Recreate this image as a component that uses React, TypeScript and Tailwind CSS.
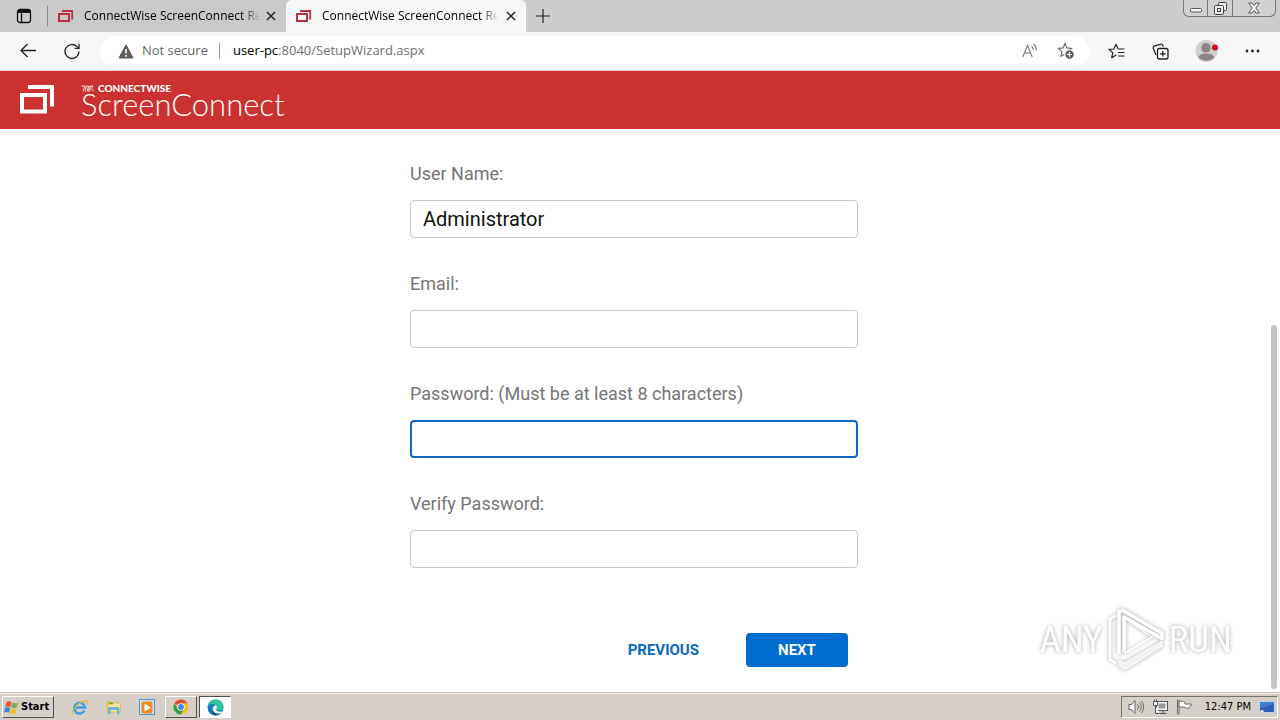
import type { ReactNode } from "react"

const fields = [
  { id: "username", label: "User Name:", type: "text", value: "Administrator" },
  { id: "email", label: "Email:", type: "email", value: "" },
  { id: "password", label: "Password: (Must be at least 8 characters)", type: "password", value: "", active: true },
  { id: "verify", label: "Verify Password:", type: "password", value: "" },
]

// two overlapping windows, used for the favicon
function Favicon() {
  return (
    <svg width="16" height="16" viewBox="0 0 16 16" fill="none" stroke="#b8323f" className="shrink-0">
      <path d="M4 3h10.200v7.500h-1" strokeWidth="1.800" />
      <rect x="1" y="6" width="10" height="7" strokeWidth="2" />
    </svg>
  )
}

function CloseIcon() {
  return (
    <svg width="10" height="10" viewBox="0 0 10 10" stroke="#222" strokeWidth="1.5">
      <path d="M1 1l8 8M9 1l-8 8" />
    </svg>
  )
}

function Tab({ active }: { active?: boolean }) {
  return (
    <div
      className={
        active
          ? "flex h-8 w-60 items-center rounded-t-md bg-[#f7f7f7] pr-2.5 pl-2.5"
          : "flex h-8 w-[238px] items-center bg-[#c9c9c9] pr-2.5 pl-2.5"
      }
    >
      <Favicon />
      <span className="ml-2.5 w-44 overflow-hidden text-xs whitespace-nowrap text-black [mask-image:linear-gradient(to_right,black_90%,transparent)]">
        ConnectWise ScreenConnect Remote
      </span>
      <button aria-label="Close tab" className="ml-auto">
        <CloseIcon />
      </button>
    </div>
  )
}

function TabBar() {
  return (
    <div className="flex h-8 items-center bg-[#cccccc]">
      <button aria-label="Tab actions" className="ml-4">
        <svg width="16" height="16" viewBox="0 0 16 16" fill="none" stroke="#111" strokeWidth="1.3">
          <rect x="1.5" y="1.5" width="13" height="13" rx="2.5" />
          <path d="M2 3.5h12" strokeWidth="3" />
          <path d="M5.5 4v10" />
        </svg>
      </button>
      <div className="ml-[15px] h-5 w-px bg-[#8b8b8b]" />
      <Tab />
      <Tab active />
      <button aria-label="New tab" className="ml-2.5">
        <svg width="14" height="14" viewBox="0 0 14 14" stroke="#222" strokeWidth="1.2">
          <path d="M7 0v14M0 7h14" />
        </svg>
      </button>
      <div className="mr-1 ml-auto flex h-[17px] self-start rounded-b-md border border-t-0 border-[#777] bg-[#d0d0d0]">
        <button aria-label="Minimize" className="flex w-6 items-center justify-center border-r border-[#777]">
          <svg width="12" height="16" viewBox="0 0 12 16" fill="#f5f5f5" stroke="#555">
            <rect x="0.5" y="8.5" width="11" height="3.5" rx="1" />
          </svg>
        </button>
        <button aria-label="Restore" className="flex w-[25px] items-center justify-center border-r border-[#777]">
          <svg width="13" height="13" viewBox="0 0 13 13" fill="#eee" stroke="#444">
            <rect x="4.5" y="0.5" width="8" height="8" rx="1" />
            <rect x="0.5" y="3.5" width="9" height="9" rx="1" />
            <rect x="3.5" y="6.5" width="3" height="3" />
          </svg>
        </button>
        <button aria-label="Close" className="flex w-[42px] items-center justify-center">
          <svg width="12" height="12" viewBox="0 0 12 12" fill="#f5f5f5" stroke="#555">
            <path d="M0.7 1h3.3l2 2.6L8 1h3.3L7.8 6l3.5 5H8L6 8.4 4 11H0.7l3.5-5z" />
          </svg>
        </button>
      </div>
    </div>
  )
}

const star = "M8 1.5l1.9 4.4 4.7.5-3.5 3.2 1 4.7L8 12l-4.1 2.3 1-4.7L1.4 6.4l4.7-.5z"

function Toolbar() {
  return (
    <div className="flex h-[39px] items-center border-b border-[#eccfd3] bg-[#f7f7f7] pr-5 pl-5">
      <button aria-label="Back">
        <svg width="16" height="16" viewBox="0 0 16 16" fill="none" stroke="#222" strokeWidth="1.3">
          <path d="M16 7.5H1M7.5 1L1 7.5 7.5 14" />
        </svg>
      </button>
      <button aria-label="Refresh" className="ml-7">
        <svg width="17" height="17" viewBox="0 0 17 17" fill="none" stroke="#222" strokeWidth="1.3">
          <path d="M15 8.500a7 7 0 1 1-2.200-5.100l2 1.900M15 0.800v4.500H10.500" />
        </svg>
      </button>
      <div className="ml-[19px] flex h-[30px] flex-1 items-center rounded-full bg-white pr-3.5 pl-[18px]">
        <svg width="16" height="15" viewBox="0 0 16 15" className="shrink-0">
          <path d="M8 0.8l7 13.200H1z" fill="#5c5c5c" stroke="#5c5c5c" strokeLinejoin="round" />
          <path d="M8 5v4.5M8 11v1.8" stroke="#fff" strokeWidth="1.6" />
        </svg>
        <span className="ml-2 text-[13px] text-[#666]">Not secure</span>
        <div className="ml-[11px] h-4 w-px bg-[#999]" />
        <span className="ml-[13px] text-[13px] text-[#707070]">
          <span className="text-black">user-pc</span>:8040/SetupWizard.aspx
        </span>
        <button aria-label="Read aloud" className="ml-auto">
          <svg width="17" height="16" viewBox="0 0 17 16" fill="none" stroke="#777" strokeWidth="1.1">
            <path d="M0.8 14L5.5 2.5 10.2 14M2.4 10h6.2" />
            <path d="M9.500 2.800a5 5 0 0 1 1.600 4M11.500 0.800a8 8 0 0 1 2.800 6.500" />
          </svg>
        </button>
        <button aria-label="Add to favorites" className="ml-[18px]">
          <svg width="18" height="18" viewBox="0 0 18 18" fill="none" stroke="#666" strokeWidth="1.1">
            <path d={star} />
            <circle cx="12.500" cy="12.500" r="4.800" fill="#5c5c5c" stroke="#fff" />
            <path d="M12.500 10v5M10 12.500h5" stroke="#fff" strokeWidth="1.2" />
          </svg>
        </button>
      </div>
      <button aria-label="Favorites" className="ml-[19px]">
        <svg width="18" height="17" viewBox="0 0 18 17" fill="none" stroke="#222" strokeWidth="1.2" strokeLinejoin="round">
          <path d="M10 5.800L8 1.200 5.900 6l-5 .4L4.800 9.800l-1.100 4.900L8.200 12" />
          <path d="M10 6h6.500M10 9.500h6.500M10 13h6.500" />
        </svg>
      </button>
      <button aria-label="Collections" className="ml-[26px]">
        <svg width="17" height="17" viewBox="0 0 17 17" fill="none" stroke="#222" strokeWidth="1.3">
          <rect x="5.5" y="5.5" width="10.5" height="10.5" rx="2" />
          <path d="M10.8 8v5.6M8 10.8h5.6" />
          <path d="M4 12L1.3 5.5a2 2 0 0 1 1.3-2.6l5.8-1.6a2 2 0 0 1 2.4 1.2l.4 1.1" />
        </svg>
      </button>
      <button aria-label="Profile" className="ml-[26px]">
        <svg width="24" height="24" viewBox="0 0 24 24">
          <circle cx="11.5" cy="12" r="11" fill="#d2cfcc" />
          <circle cx="11" cy="8.8" r="4.8" fill="#8b8685" />
          <path d="M3.5 18.500c0-2.500 3.200-4 7.700-4s7.800 1.500 7.800 4a11 11 0 0 1-15.500 0z" fill="#8b8685" />
          <circle cx="20" cy="8.500" r="3" fill="#d9001b" />
        </svg>
      </button>
      <button aria-label="Settings and more" className="ml-[26px]">
        <svg width="15" height="4" viewBox="0 0 15 4" fill="#222">
          <circle cx="2" cy="2" r="1.4" />
          <circle cx="7.500" cy="2" r="1.4" />
          <circle cx="13" cy="2" r="1.4" />
        </svg>
      </button>
    </div>
  )
}

function BrandHeader() {
  return (
    <header className="flex h-[58px] items-center bg-[#cc3131] pl-5 text-white">
      <svg width="34" height="30" viewBox="0 0 34 30" fill="none" stroke="#fff" strokeWidth="4">
        <path d="M8 2h24v19M28 19.500h6" strokeWidth="4" />
        <path d="M26.500 8h3.500v15.500h-3.500z" fill="#cc3131" stroke="none" />
        <rect x="2" y="10" width="23" height="16.500" />
      </svg>
      <div className="mb-1 ml-[27px] font-[Lato,sans-serif]">
        <div className="flex h-3 items-center gap-1">
          <svg width="13" height="7" viewBox="0 0 13 7" fill="none" stroke="#fff" strokeWidth="0.8">
            <path d="M0.500 1h3.500L2 6.500M5.500 1c-1 2-1.500 3.500-1 5.500M5.500 1h2l-1.500 5.500M8.500 1l-1 5.500M9 1c1 1.500-.5 3.500 0 5.500M9.500 1h2.500c-1.500 2-1.500 3 .5 5.500" />
          </svg>
          <span className="text-[10px] leading-3 font-black">CONNECTWISE</span>
        </div>
        <div className="text-[31px] leading-5 font-light">ScreenConnect</div>
      </div>
    </header>
  )
}

function SetupForm() {
  return (
    <form className="mx-auto w-[448px] pt-[33px] font-[Roboto,sans-serif]" onSubmit={(e) => e.preventDefault()}>
      <div className="flex flex-col gap-[34px]">
        {fields.map((field) => (
          <div key={field.id} className="flex flex-col gap-3.5">
            <label htmlFor={field.id} className="text-lg leading-6 text-[#757575]">
              {field.label}
            </label>
            <input
              id={field.id}
              type={field.type}
              defaultValue={field.value}
              className={
                field.active
                  ? "h-[38px] rounded border-2 border-[#0f6abf] px-[11px] text-xl outline-none"
                  : "h-[38px] rounded border border-[#c8c8c8] px-3 text-xl text-[#111] outline-none"
              }
            />
          </div>
        ))}
      </div>
      <div className="mt-[65px] flex justify-end gap-[15px] pr-2.5 text-[15px] font-bold">
        <button type="button" className="h-[34px] px-8 text-[#0b68c0]">
          PREVIOUS
        </button>
        <button type="submit" className="h-[34px] w-[102px] rounded bg-[#006bd0] text-white">
          NEXT
        </button>
      </div>
    </form>
  )
}

function Watermark() {
  return (
    <div className="absolute right-12 bottom-5 flex items-center gap-1 font-['Roboto_Condensed','Open_Sans_Condensed','Noto_Sans_ExtraCondensed','Noto_Sans_Condensed',Roboto,sans-serif] text-[37px] text-white drop-shadow-[0_0_2px_rgba(0,0,0,0.35)]">
      <span>ANY</span>
      <svg width="58" height="64" viewBox="0 0 58 64" fill="none" stroke="#fff" strokeWidth="3.500" strokeLinejoin="round">
        <path d="M9 7.500L3 11v40.500l6 3.500" strokeWidth="2.500" />
        <path d="M12 46V3.500l4-1L55 25.500v5L17 9v35" />
        <path d="M18 10v35l27-16z" strokeWidth="1.500" />
        <path d="M55 33.500L18 55l-6-2.500v5l6 4L55 38z" fill="#f1f1f1" stroke="#f7f7f7" strokeWidth="1.500" />
      </svg>
      <span>RUN</span>
    </div>
  )
}

function TaskButton({ label, className, children }: { label: string; className: string; children: ReactNode }) {
  return (
    <button aria-label={label} className={`flex h-[22px] items-center justify-center ${className}`}>
      {children}
    </button>
  )
}

const raised = "border border-t-white border-l-white border-r-[#55504b] border-b-[#55504b]"

function Taskbar() {
  return (
    <footer className="flex h-7 items-center border-t border-[#c5c1bc] bg-[#d6cfc7] pr-0.5 pl-0.5 pt-px shadow-[inset_0_1px_0_#f4f0ea]">
      <button className={`flex h-[22px] w-[52px] items-center gap-0.5 pl-px font-['DejaVu_Sans_Condensed','DejaVu_Sans',sans-serif] text-[11px] font-bold text-black ${raised}`}>
        <svg width="15" height="15" viewBox="0 0 14 14" className="shrink-0">
          <path d="M2.500 2c2-1.300 3-.8 4.500 0L6 6.500C4.500 5.500 3 5.500 1 6.400z" fill="#e8582c" />
          <path d="M7.800 2.400c2 1 3.500.9 5.400-.1L12 7c-1.700 1-3.200.8-5.200-.2z" fill="#76b043" />
          <path d="M.9 7.300c2-1 3.500-.8 4.900.1L4.600 12C3.200 11 1.700 11 0 11.800z" fill="#3b8ad8" />
          <path d="M6.500 7.900c2 1 3.500.9 5.300 0l-1.200 4.600c-1.700 1-3.300.9-5.300-.1z" fill="#f4bd28" />
        </svg>
        Start
      </button>
      <TaskButton label="Internet Explorer" className="ml-[17px] w-[17px]">
        <svg width="17" height="17" viewBox="0 0 17 17" fill="none">
          <path d="M13.500 11.500a5.400 5.400 0 1 1 .5-3H4.500" stroke="#3aa0df" strokeWidth="2.600" />
          <path d="M1.500 15.500C-.5 12 8 2.500 14.500 1.600c2-.2 1.700 1.800.8 3.400" stroke="#e5b637" strokeWidth="1.300" />
        </svg>
      </TaskButton>
      <TaskButton label="Explorer" className="ml-[17px] w-[17px]">
        <svg width="17" height="16" viewBox="0 0 17 16">
          <path d="M1 2h5l1 1.500h7V12H1z" fill="#e6c55c" />
          <path d="M3 4h12.500v9H2z" fill="#f6e39a" stroke="#cfa93e" strokeWidth="0.600" />
          <path d="M3 15V9.500C3 8.500 4 8 5 8h7.500c1 0 2 .5 2 1.500V15h-2.500v-4H5.500v4z" fill="#68b3d6" />
          <path d="M4 4.500h4" stroke="#53a94d" strokeWidth="1.500" />
        </svg>
      </TaskButton>
      <TaskButton label="Media Player" className="ml-[17px] w-[17px]">
        <svg width="17" height="17" viewBox="0 0 17 17">
          <rect x="0.500" y="0.500" width="15" height="15" fill="#c8e3f5" stroke="#5397c4" />
          <rect x="2.500" y="2.500" width="11" height="12" rx="2" fill="#f08a1d" />
          <path d="M5.500 4.500l6.500 4-6.500 4z" fill="#fff" />
        </svg>
      </TaskButton>
      <TaskButton label="Chrome" className={`ml-[9px] w-8 ${raised}`}>
        <svg width="16" height="16" viewBox="0 0 16 16">
          <circle cx="8" cy="8" r="7.500" fill="#f6bf26" />
          <path d="M8 8L1.500 4.200A7.500 7.500 0 0 1 14.500 4.300H8z" fill="#dd4a3c" />
          <path d="M1.500 4.200A7.500 7.500 0 0 0 7.700 15.500L11.200 9.700 8 8 4.800 10z" fill="#319c50" />
          <circle cx="8" cy="8" r="3.800" fill="#fff" />
          <circle cx="8" cy="8" r="2.900" fill="#4485ee" />
        </svg>
      </TaskButton>
      <TaskButton
        label="Edge"
        className="ml-0.5 w-8 border border-t-[#55504b] border-r-white border-b-white border-l-[#55504b] bg-white"
      >
        <svg width="17" height="17" viewBox="0 0 17 17">
          <circle cx="8.500" cy="8.500" r="8" fill="#167bc4" />
          <path d="M.6 8C1 3.500 4.500.5 8.500.5c4.800 0 8 3.300 8 6.700 0 3-2.400 4.300-4.600 4.300-1.800 0-2.900-.6-2.900-1.200 0-.5.9-.8.900-2 0-1.800-1.900-3.200-4.200-3.200C3.200 5.100 1.200 6.300.6 8z" fill="#35c39a" />
          <path d="M9 10.300c0-.5.9-.8.9-2 0-.8-.4-1.500-1-2.100-2.200.5-3.500 2.200-3.200 4.600.3 2.200 2.500 4.200 5.800 4 2-.2 3.400-1.200 4.200-2.600-1.700.8-6.700.8-6.700-1.900z" fill="#fff" />
          <path d="M5.700 10.800c.3 2.200 2.500 4.200 5.800 4l2-.5a8 8 0 0 1-5 2.200c-3-.4-4.400-3.400-2.800-5.700z" fill="#0b4f96" />
        </svg>
      </TaskButton>
      <div className="ml-auto flex h-[22px] items-center border border-t-[#77716b] border-r-white border-b-white border-l-[#77716b] pr-px pl-1.5">
        <svg width="17" height="16" viewBox="0 0 17 16" fill="none" stroke="#666" strokeWidth="1">
          <path d="M1 5.500h2.500L7 1.500v13L3.500 10.500H1z" fill="#fff" />
          <path d="M9.500 5.500a4 4 0 0 1 0 5M11.500 3.500a7 7 0 0 1 0 9M13.500 2a9.500 9.500 0 0 1 0 12" />
        </svg>
        <svg width="17" height="16" viewBox="0 0 17 16" fill="#f5f5f5" stroke="#555" className="ml-[7px]">
          <rect x="4.500" y="2.500" width="11" height="9" />
          <rect x="6.500" y="4.500" width="7" height="5" fill="#999" stroke="none" />
          <path d="M7.500 14.500h7M11 12v2.500" />
          <path d="M1.500 2.500h4v4h-4zM2.500 0.500v2M4.500 0.500v2M3.500 6.500v8h4" />
        </svg>
        <svg width="17" height="16" viewBox="0 0 17 16" fill="#fff" stroke="#666" className="ml-[7px]">
          <path d="M1.500 1v14h1.500V1z" />
          <path d="M3 2.500c3-1 4 0 6 1v1.500h6.500l-2 4c-3 1-3.500-.5-5.500-1H3z" />
        </svg>
        <time className="ml-3 font-['DejaVu_Sans_Condensed','DejaVu_Sans',sans-serif] text-[11px] text-black">12:47 PM</time>
        <svg width="17" height="16" viewBox="0 0 17 16" className="ml-2">
          <rect x="0.500" y="2.500" width="15" height="11" fill="#2a5fb5" stroke="#bfd3ec" />
          <path d="M1 3h14v2L3 9H1z" fill="#3f7dcb" />
          <path d="M1 13l1-2h2l1 2z" fill="#dfeaf7" />
        </svg>
      </div>
    </footer>
  )
}

export default function App() {
  return (
    <div className="flex min-h-screen flex-col bg-white font-['Open_Sans','Noto_Sans',sans-serif]">
      <TabBar />
      <Toolbar />
      <BrandHeader />
      <main className="relative flex flex-1">
        <div className="flex-1">
          <SetupForm />
        </div>
        {/* scrollbar */}
        <div className="flex w-3 flex-col justify-end pr-[3px] pb-[3px] pl-[3px]">
          <div className="h-[65%] rounded-full bg-[#c4c4c4]" />
        </div>
        <Watermark />
      </main>
      <Taskbar />
    </div>
  )
}
